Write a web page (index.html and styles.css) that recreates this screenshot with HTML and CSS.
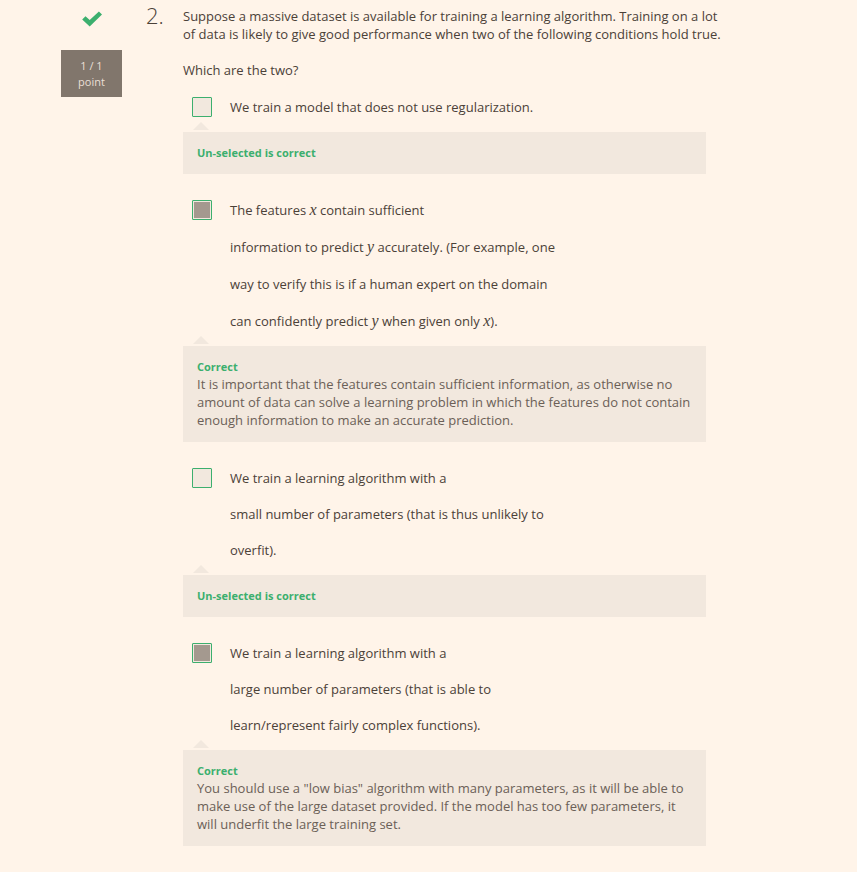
FILE: index.html
```html
<!DOCTYPE html>
<html lang="en">
<head>
<meta charset="utf-8">
<meta name="viewport" content="width=device-width, initial-scale=1">
<title>Question 2</title>
<link rel="stylesheet" href="styles.css">
</head>
<body>
<main class="question">
  <aside class="score">
    <svg class="score-icon" viewBox="0 0 20 16" role="img" aria-label="Correct"><path d="M0.2 8.6 3.5 5.3 7.7 9 16.9 0.4 20 3.4 7.7 15.6Z"/></svg>
    <div class="score-badge">1 / 1<br>point</div>
  </aside>
  <div class="number">2.</div>
  <section class="content">
    <div class="prompt">
      <p>Suppose a massive dataset is available for training a learning algorithm. Training on a lot of data is likely to give good performance when two of the following conditions hold true.</p>
      <p>Which are the two?</p>
    </div>

    <div class="answer">
      <div class="option">
        <input class="box" type="checkbox" id="a1">
        <label for="a1">We train a model that does not use regularization.</label>
      </div>
      <div class="feedback"><strong>Un-selected is correct</strong></div>
    </div>

    <div class="answer">
      <div class="option option-math">
        <input class="box" type="checkbox" id="a2" checked>
        <label for="a2">The features <i>x</i> contain sufficient<br>information to predict <i>y</i> accurately. (For example, one<br>way to verify this is if a human expert on the domain<br>can confidently predict <i>y</i> when given only <i>x</i>).</label>
      </div>
      <div class="feedback"><strong>Correct</strong>
        <p>It is important that the features contain sufficient information, as otherwise no amount of data can solve a learning problem in which the features do not contain enough information to make an accurate prediction.</p>
      </div>
    </div>

    <div class="answer">
      <div class="option">
        <input class="box" type="checkbox" id="a3">
        <label for="a3">We train a learning algorithm with a<br>small number of parameters (that is thus unlikely to<br>overfit).</label>
      </div>
      <div class="feedback"><strong>Un-selected is correct</strong></div>
    </div>

    <div class="answer">
      <div class="option">
        <input class="box" type="checkbox" id="a4" checked>
        <label for="a4">We train a learning algorithm with a<br>large number of parameters (that is able to<br>learn/represent fairly complex functions).</label>
      </div>
      <div class="feedback"><strong>Correct</strong>
        <p>You should use a "low bias" algorithm with many parameters, as it will be able to make use of the large dataset provided. If the model has too few parameters, it will underfit the large training set.</p>
      </div>
    </div>
  </section>
</main>
</body>
</html>
```
FILE: styles.css
```css
* { box-sizing: border-box; }

body {
  margin: 0;
  background: #fff4e9;
  color: #4b4138;
  font: 13px/18px "Open Sans", sans-serif;
}

p { margin: 0; }

.question {
  display: grid;
  grid-template-columns: 85px 37px minmax(0, 523px);
  justify-content: center;
  padding: 7px 90px 26px 0;
}

.score {
  display: flex;
  flex-direction: column;
  align-items: center;
  gap: 23px;
  padding: 4px 24px 0 0;
}
.score-icon {
  width: 20px;
  height: 16px;
  fill: #3caf6e;
}
.score-badge {
  width: 100%;
  padding: 8px 0 7px;
  background: #81766c;
  color: #e9dfd5;
  font-size: 11px;
  line-height: 16px;
  text-align: center;
}

.number {
  font-size: 22px;
  font-weight: 300;
  line-height: 16px;
}

.prompt {
  display: grid;
  gap: 18px;
  margin: 0 -20px 10px 0;
}

.answer { margin-bottom: 18px; }
.answer:last-child { margin-bottom: 0; }

.option {
  display: flex;
  gap: 18px;
  padding: 0 9px 7px;
  line-height: 36px;
}
.option-math {
  padding-bottom: 6px;
  line-height: 37px;
}
.option i {
  font-family: "Liberation Serif", serif;
  font-size: 16px;
  line-height: 1;
}

.box {
  appearance: none;
  flex: none;
  width: 20px;
  height: 20px;
  margin: 8px 0 0;
  border: 1px solid #3caf6e;
  border-radius: 1px;
  background: #f2e8de;
}
.box:checked {
  background: #a4998f;
  box-shadow: inset 0 0 0 1px #f2e8de;
}

.feedback {
  position: relative;
  padding: 12px 14px 13px;
  background: #f2e8de;
  color: #6b6057;
}
.feedback::before {
  content: "";
  position: absolute;
  left: 10px;
  top: -10px;
  width: 16px;
  height: 8px;
  background: #f2e8de;
  clip-path: polygon(50% 0, 100% 100%, 0 100%);
}
.feedback strong {
  display: block;
  color: #3caf6e;
  font-size: 11px;
  line-height: 17px;
}
```
